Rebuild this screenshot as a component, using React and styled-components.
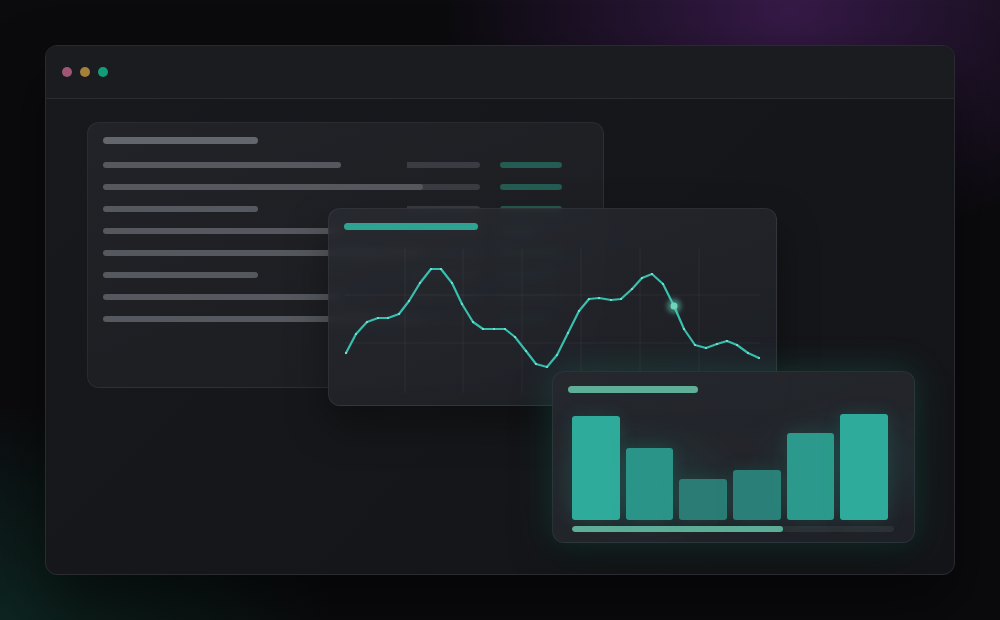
import React from "react";
import styled, { createGlobalStyle } from "styled-components";

const GlobalStyle = createGlobalStyle`
  html, body {
    margin: 0;
    padding: 0;
    background: #0b0b0e;
    font-family: "Inter", "Liberation Sans", sans-serif;
  }
`;

const rows = [
  { left: 238, mid: 73, right: 62 },
  { left: 320, mid: 73, right: 62 },
  { left: 155, mid: 73, right: 62 },
  { left: 238, mid: 73, right: 37 },
  { left: 320, mid: 73, right: 62 },
  { left: 155, mid: 73, right: 57 },
  { left: 238, mid: 73, right: 62 },
  { left: 320, mid: 73, right: 50 },
];

// chart points, svg coords (abs - 344, abs - 240)
const points = [
  [2, 112], [12, 93], [23, 81], [34, 77], [44, 77], [55, 73], [65, 60], [76, 42],
  [87, 28], [97, 28], [108, 42], [118, 63], [129, 81], [139, 88], [150, 88], [161, 88],
  [171, 96], [182, 110], [192, 123], [203, 126], [213, 114], [224, 92], [235, 70], [245, 58],
  [255, 57], [267, 59], [277, 58], [288, 48], [298, 37], [308, 33], [319, 43], [330, 65],
  [340, 88], [351, 104], [362, 107], [373, 103], [383, 100], [393, 104], [404, 112], [415, 117],
];

const vLines = [61, 119, 178, 237, 296, 355];
const hLines = [54, 102];

const bars = [
  { h: 104, c: "#2fab9b" },
  { h: 72, c: "#2b9488" },
  { h: 41, c: "#2a7c74" },
  { h: 50, c: "#2a8078" },
  { h: 87, c: "#2b9a8c" },
  { h: 106, c: "#2fab9b" },
];

const App = () => {
  const path = points.map((p, i) => `${i ? "L" : "M"}${p[0]} ${p[1]}`).join(" ");

  return (
    <Page>
      <GlobalStyle />
      <Window>
        <TitleBar>
          <Dot color="#a05676" />
          <Dot color="#a5803a" />
          <Dot color="#129c78" />
        </TitleBar>
        <Body>
          <TableCard>
            <Heading width={155} color="#63666d" />
            <Rows>
              {rows.map((r, i) => (
                <Row key={i}>
                  <Cell width={r.left} color="#55585e" $front />
                  <Cell width={r.mid} color="#393c42" $square />
                  <Cell width={r.right} color="#245b52" />
                </Row>
              ))}
            </Rows>
          </TableCard>

          <ChartCard>
            <Heading width={134} color="#2fa391" />
            <ChartSvg viewBox="0 0 416 155" width="416" height="155">
              <defs>
                <filter id="glow" x="-200%" y="-200%" width="500%" height="500%">
                  <feGaussianBlur stdDeviation="2.5" />
                </filter>
              </defs>
              {vLines.map((x) => (
                <line key={x} x1={x} y1={8} x2={x} y2={152} stroke="rgba(255,255,255,0.05)" strokeWidth="1" />
              ))}
              {hLines.map((y) => (
                <line key={y} x1={1} y1={y} x2={416} y2={y} stroke="rgba(255,255,255,0.05)" strokeWidth="1" />
              ))}
              <path d={path} fill="none" stroke="#38bfae" strokeWidth="2.2" strokeLinejoin="round" strokeLinecap="round" />
              {points.map((p, i) => (
                <circle key={i} cx={p[0]} cy={p[1]} r="1.1" fill="#7fe6d6" />
              ))}
              <circle cx="330" cy="65" r="7" fill="#5fd0b6" opacity="0.55" filter="url(#glow)" />
              <circle cx="330" cy="65" r="3.5" fill="#6fd4bc" />
            </ChartSvg>
          </ChartCard>

          <BarCard>
            <Heading width={130} color="#5fae98" />
            <Bars>
              {bars.map((b, i) => (
                <Bar key={i} color={b.c} style={{ height: b.h }} />
              ))}
            </Bars>
            <Track>
              <Fill style={{ width: "65.5%" }} />
            </Track>
          </BarCard>
        </Body>
      </Window>
    </Page>
  );
};

export default App;

const Page = styled.div`
  width: 1000px;
  height: 620px;
  box-sizing: border-box;
  padding: 45px;
  overflow: hidden;
  background:
    radial-gradient(ellipse 480px 340px at 790px 10px, rgba(72, 32, 96, 0.7), transparent 72%),
    radial-gradient(ellipse 460px 300px at 0px 620px, rgba(14, 62, 50, 0.5), transparent 72%),
    #0b0b0e;
`;

const Window = styled.div`
  width: 910px;
  height: 530px;
  box-sizing: border-box;
  display: flex;
  flex-direction: column;
  border: 1px solid #2a2b30;
  border-radius: 12px;
  background: linear-gradient(135deg, #18191c 0%, #151619 60%, #141518 100%);
  box-shadow: 0 30px 60px rgba(0, 0, 0, 0.5);
  overflow: hidden;
`;

const TitleBar = styled.div`
  height: 52px;
  flex: none;
  display: flex;
  align-items: center;
  gap: 8px;
  padding: 0 0 0 16px;
  background: #1b1c20;
  border-bottom: 1px solid #2b2c31;
`;

const Dot = styled.span`
  width: 10px;
  height: 10px;
  border-radius: 50%;
  background: ${(p) => p.color};
`;

const Body = styled.div`
  position: relative;
  flex: 1;
  padding: 23px 0 0 41px;
`;

const Card = styled.div`
  box-sizing: border-box;
  border-radius: 12px;
  border: 1px solid rgba(255, 255, 255, 0.06);
`;

const TableCard = styled(Card)`
  width: 517px;
  height: 266px;
  padding: 14px 15px;
  background: linear-gradient(160deg, #222328 0%, #1e1f23 55%, #1c1d21 100%);
`;

const Heading = styled.div`
  width: ${(p) => p.width}px;
  height: 7px;
  border-radius: 4px;
  background: ${(p) => p.color};
`;

const Rows = styled.div`
  margin-top: 18px;
  display: flex;
  flex-direction: column;
  gap: 16px;
`;

const Row = styled.div`
  display: grid;
  grid-template-columns: 304px 93px 62px;
  align-items: center;
  height: 6px;
`;

const Cell = styled.div`
  width: ${(p) => p.width}px;
  height: 6px;
  border-radius: ${(p) => (p.$square ? "0 3px 3px 0" : "3px")};
  background: ${(p) => p.color};
  position: relative;
  z-index: ${(p) => (p.$front ? 1 : 0)};
`;

const ChartCard = styled(Card)`
  position: absolute;
  left: 282px;
  top: 109px;
  width: 449px;
  height: 198px;
  padding: 14px 15px 0;
  background: linear-gradient(160deg, rgba(40, 43, 49, 0.86) 0%, rgba(33, 35, 41, 0.9) 60%, rgba(31, 32, 38, 0.92) 100%);
  backdrop-filter: blur(5px);
  border-color: rgba(255, 255, 255, 0.07);
  box-shadow: 0 18px 40px rgba(0, 0, 0, 0.35);
  z-index: 2;
`;

const ChartSvg = styled.svg`
  display: block;
  margin-top: 11px;
  overflow: visible;
`;

const BarCard = styled(Card)`
  position: absolute;
  left: 506px;
  top: 272px;
  width: 363px;
  height: 172px;
  padding: 14px 15px 0;
  background:
    radial-gradient(ellipse 150px 90px at 90px 110px, rgba(40, 150, 130, 0.16), transparent 70%),
    radial-gradient(ellipse 150px 90px at 300px 90px, rgba(40, 150, 130, 0.14), transparent 70%),
    linear-gradient(160deg, rgba(38, 41, 47, 0.94) 0%, rgba(32, 34, 40, 0.96) 100%);
  backdrop-filter: blur(6px);
  border-color: rgba(120, 200, 190, 0.1);
  box-shadow: 0 0 34px rgba(40, 170, 150, 0.24), 0 18px 40px rgba(0, 0, 0, 0.4);
  z-index: 3;
`;

const Bars = styled.div`
  margin: 21px 0 0 4px;
  width: 316px;
  height: 106px;
  display: flex;
  align-items: flex-end;
  gap: 6px;
`;

const Bar = styled.div`
  flex: 1;
  border-radius: 3px;
  background: ${(p) => p.color};
  box-shadow: 0 0 18px rgba(45, 170, 150, 0.18);
`;

const Track = styled.div`
  margin: 6px 0 0 4px;
  width: 322px;
  height: 6px;
  border-radius: 3px;
  background: #2c3034;
  overflow: hidden;
`;

const Fill = styled.div`
  height: 100%;
  border-radius: 3px;
  background: #5fae98;
`;
